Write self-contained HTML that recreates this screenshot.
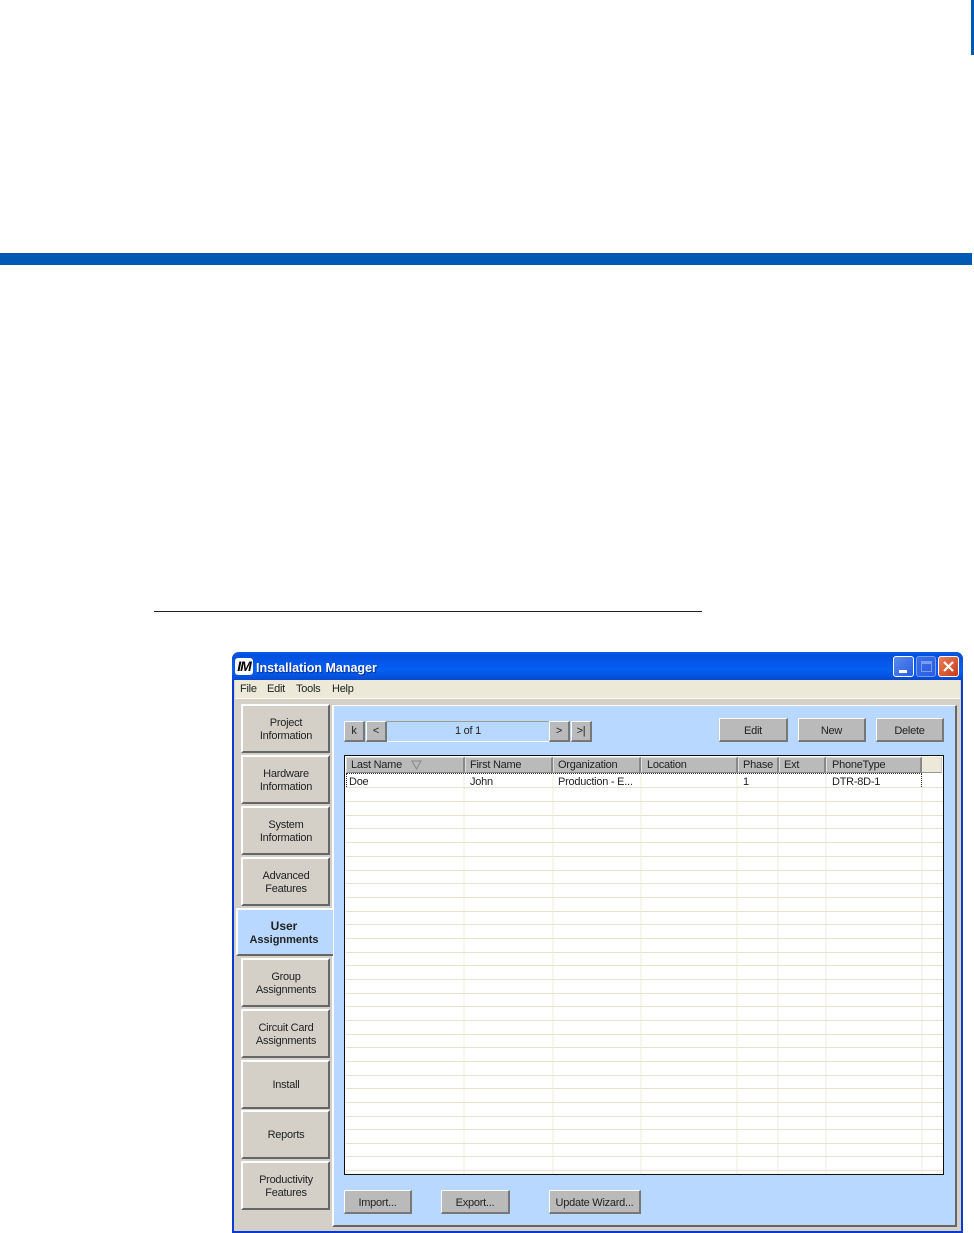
<!DOCTYPE html>
<html><head><meta charset="utf-8"><style>
html,body{margin:0;padding:0;background:#fff}
#p{position:relative;width:974px;height:1233px;overflow:hidden;background:#fff;font-family:"Liberation Sans",sans-serif;font-size:11px;letter-spacing:-.25px;color:#222}
#p div,#p span.a{position:absolute;box-sizing:border-box}
.nav{left:241px;width:89px;height:49px;background:#d4d0c8;border:2px solid;border-color:#fff #666 #666 #fff;text-align:center;line-height:12.7px;display:flex;align-items:center;justify-content:center;padding:2px 0 0 1px}
.btn{background:#bababa;border:1px solid;border-color:#fff #777 #777 #fff;border-width:1px 2px 2px 1px;text-align:center;display:flex;align-items:center;justify-content:center;padding-top:2px}
.h{top:757px;height:16px;background:#bababa;border:1px solid;border-color:#ddd #888 #888 #ddd;border-width:1px 2px 1px 1px;line-height:15px;padding-left:4px;white-space:nowrap}
.c{top:775px;line-height:14px;white-space:nowrap}
.m{top:682px;line-height:14px}
</style></head><body><div id="p">
<div style="left:971px;top:0;width:3px;height:55px;background:#0059b3"></div>
<div style="left:0;top:253px;width:972px;height:12px;background:#0059b3"></div>
<div style="left:154px;top:611px;width:548px;height:1px;background:#222"></div>

<div style="left:232px;top:652px;width:731px;height:581px;background:#d4d0c8;border:solid #0a3ad0;border-width:0 2.5px 2px 2.5px;border-radius:7px 7px 0 0"></div>
<div style="left:232px;top:652px;width:731px;height:28px;border-radius:7px 7px 0 0;background:linear-gradient(#0a5ce8 0,#0450dc 12%,#0458ea 40%,#0560f0 65%,#0350dc 90%,#0a46cc 100%)"></div>
<div style="left:235px;top:658px;width:18px;height:17px;background:#fff;border-radius:3px;color:#000;font:italic bold 14px/17px 'Liberation Sans',sans-serif;text-align:center;letter-spacing:-1px">IM</div>
<div style="left:256px;top:660px;color:#fff;font-weight:bold;font-size:12.5px;letter-spacing:0;line-height:17px;text-shadow:1px 1px 1px #0a2a90;white-space:nowrap">Installation Manager</div>
<div style="left:893px;top:656px;width:21px;height:21px;border:1px solid #fff;border-radius:3px;background:linear-gradient(135deg,#5a8cf0,#2a5ce0)"><div style="left:5px;top:13px;width:8px;height:3px;background:#fff"></div></div>
<div style="left:916px;top:656px;width:20px;height:21px;border:1px solid #7c9cf0;border-radius:3px;background:linear-gradient(135deg,#3a70ea,#2a5ce0)"><div style="left:4px;top:4px;width:11px;height:11px;border:1px solid #7c9cf0;border-top-width:3px"></div></div>
<div style="left:938px;top:656px;width:21px;height:21px;border:1px solid #fff;border-radius:3px;background:linear-gradient(135deg,#e8805a,#c83a18)"><svg style="position:absolute;left:3px;top:3px" width="13" height="13"><path d="M2 2L11 11M11 2L2 11" stroke="#fff" stroke-width="2.2"/></svg></div>

<div style="left:235px;top:680px;width:725px;height:18px;background:#ece9d8"></div>
<div style="left:235px;top:698px;width:725px;height:1px;background:#fbfaf4"></div>
<div class="m" style="left:240px">File</div><div class="m" style="left:267px">Edit</div><div class="m" style="left:296px">Tools</div><div class="m" style="left:332px">Help</div>

<div style="left:332px;top:705px;width:625px;height:522px;background:#b8d8ff;border:solid;border-color:#fff #666 #666 #fff;border-width:1.5px 2px 2px 2px"></div>

<div class="nav" style="top:704px">Project<br>Information</div>
<div class="nav" style="top:755px">Hardware<br>Information</div>
<div class="nav" style="top:806px">System<br>Information</div>
<div class="nav" style="top:857px">Advanced<br>Features</div>
<div style="left:236px;top:908px;width:97px;height:48px;background:#b8d8ff;border:solid;border-color:#fff #b8d8ff #666 #fff;border-width:2px 0 2px 2px;text-align:center;font-weight:bold;line-height:13px;padding:10px 3px 0 0;font-size:11px;letter-spacing:0"><span style="font-size:12px">User</span><br>Assignments</div>
<div class="nav" style="top:958px">Group<br>Assignments</div>
<div class="nav" style="top:1009px">Circuit Card<br>Assignments</div>
<div class="nav" style="top:1060px">Install</div>
<div class="nav" style="top:1110px">Reports</div>
<div class="nav" style="top:1161px">Productivity<br>Features</div>

<div class="btn" style="left:344px;top:721px;width:21px;height:21px;padding-top:0">k</div>
<div class="btn" style="left:366px;top:721px;width:21px;height:21px;padding-top:0">&lt;</div>
<div style="left:387px;top:721px;width:162px;height:21px;border-top:1px solid #a09c90;border-bottom:1px solid #fff;text-align:center;line-height:19px">1 of 1</div>
<div class="btn" style="left:549px;top:721px;width:21px;height:21px;padding-top:0">&gt;</div>
<div class="btn" style="left:571px;top:721px;width:21px;height:21px;padding-top:0">&gt;|</div>

<div class="btn" style="left:719px;top:718px;width:69px;height:24px">Edit</div>
<div class="btn" style="left:798px;top:718px;width:68px;height:24px">New</div>
<div class="btn" style="left:876px;top:718px;width:68px;height:24px">Delete</div>

<div style="left:344px;top:755px;width:600px;height:420px;background:#fff;border:1.5px solid #111"></div>
<svg style="position:absolute;left:346px;top:774px" width="597" height="400" fill="none" shape-rendering="crispEdges">
<path d="M118 0V400M207 0V400M295 0V400M391 0V400M432 0V400M480 0V400M576 0V400" stroke="#eeecd9"/>
<path stroke="#e6e4cc" d="M0 13.5H597M0 27.5H597M0 41.5H597M0 54.5H597M0 68.5H597M0 82.5H597M0 96.5H597M0 109.5H597M0 123.5H597M0 137.5H597M0 150.5H597M0 164.5H597M0 178.5H597M0 191.5H597M0 205.5H597M0 219.5H597M0 232.5H597M0 246.5H597M0 260.5H597M0 273.5H597M0 287.5H597M0 301.5H597M0 314.5H597M0 328.5H597M0 342.5H597M0 355.5H597M0 369.5H597M0 382.5H597M0 396.5H597"/>
</svg>
<div class="h" style="left:346px;width:119px">Last Name</div>
<svg style="position:absolute;left:411px;top:760px" width="12" height="10"><path d="M1 1H10L5.500 9Z" fill="none" stroke="#888"/></svg>
<div class="h" style="left:465px;width:88px">First Name</div>
<div class="h" style="left:553px;width:88px">Organization</div>
<div class="h" style="left:641px;width:97px;padding-left:5px">Location</div>
<div class="h" style="left:738px;width:41px">Phase</div>
<div class="h" style="left:779px;width:47px">Ext</div>
<div class="h" style="left:826px;width:96px;padding-left:5px">PhoneType</div>
<div style="left:922px;top:757px;width:20px;height:16px;background:#ece9d8;border-right:1px solid #ccc;border-bottom:1px solid #999"></div>
<div style="left:346px;top:773px;width:576px;height:14px;border:1px dotted #333;border-width:1px 1px 0 1px"></div>
<div class="c" style="left:349px">Doe</div>
<div class="c" style="left:470px">John</div>
<div class="c" style="left:558px">Production - E...</div>
<div class="c" style="left:743px">1</div>
<div class="c" style="left:832px">DTR-8D-1</div>

<div class="btn" style="left:344px;top:1190px;width:68px;height:24px">Import...</div>
<div class="btn" style="left:441px;top:1190px;width:69px;height:24px">Export...</div>
<div class="btn" style="left:549px;top:1190px;width:92px;height:24px">Update Wizard...</div>
</div></body></html>
